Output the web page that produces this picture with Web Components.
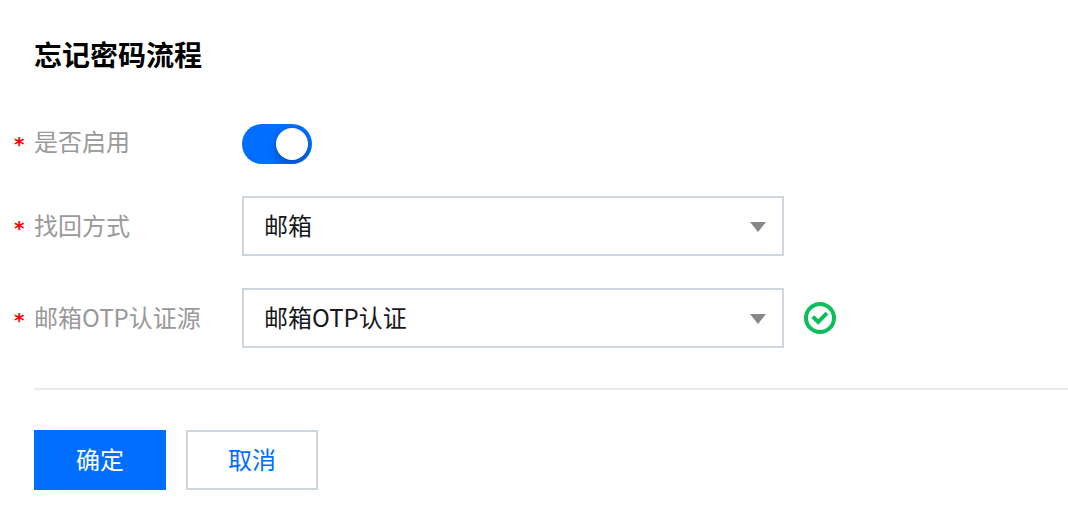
<!DOCTYPE html>
<html lang="zh-CN">
<head>
<meta charset="utf-8">
<title>忘记密码流程</title>
<style>
    :root {
        --primary-color: #006eff;
        --border-color: #cfd5de;
        --divider-color: #e7eaef;
        --label-color: #999;
        --text-color: #16181a;
        --success-color: #0abf5b;
        --required-color: #f00;
    }
    body {
        margin: 0;
        background: #fff;
        color: var(--text-color);
        font: 24px/36px "Noto Sans CJK SC", sans-serif;
    }
</style>
</head>
<body>
<password-flow></password-flow>

<script>
function createTemplate(html) {
    const template = document.createElement('template');
    template.innerHTML = html;
    return template;
}

class BaseComponent extends HTMLElement {
    constructor() {
        super();
        this.attachShadow({ mode: 'open' });
        this.shadowRoot.appendChild(this.constructor.template.content.cloneNode(true));
    }
}

// One line of the form: required mark, label, control
class FormRow extends BaseComponent {
    static template = createTemplate(`
<style>
    :host {
        display: flex;
        align-items: flex-start;
    }
    .label {
        display: flex;
        flex: none;
        box-sizing: border-box;
        width: 242px;
        padding: var(--label-padding, 12px) 0 0 14px;
        color: var(--label-color);
        line-height: 34px;
    }
    .required {
        flex: none;
        width: 20px;
        height: 34px;
        color: var(--required-color);
        font: bold 20px/40px "DejaVu Sans", sans-serif;
    }
    .control {
        display: flex;
        flex: 1;
        align-items: center;
        gap: 20px;
        min-width: 0;
    }
</style>
<div class="label"><span class="required">*</span><slot name="label"></slot></div>
<div class="control"><slot></slot></div>
`);
}

class SelectBox extends BaseComponent {
    static template = createTemplate(`
<style>
    :host {
        display: grid;
        flex: 0 1 542px;
        align-items: center;
        min-width: 0;
    }
    ::slotted(select) {
        grid-area: 1 / 1;
        appearance: none;
        box-sizing: border-box;
        width: 100%;
        margin: 0;
        padding: 9px 48px 11px 20px;
        border: 2px solid var(--border-color);
        border-radius: 0;
        background: #fff;
        color: inherit;
        font: inherit;
    }
    svg {
        grid-area: 1 / 1;
        justify-self: end;
        z-index: 1;
        margin-right: 18px;
        fill: #888;
        pointer-events: none;
    }
</style>
<slot></slot>
<svg width="16" height="12" viewBox="0 0 16 12" aria-hidden="true"><path d="M0 2h16L8 12z"/></svg>
`);
}

class SuccessIcon extends BaseComponent {
    static template = createTemplate(`
<style>
    :host {
        display: flex;
        flex: none;
    }
    svg {
        fill: none;
        stroke: var(--success-color);
        stroke-width: 4;
    }
</style>
<svg width="32" height="32" viewBox="0 0 32 32" role="img" aria-label="通过">
    <circle cx="16" cy="16" r="14"/>
    <path d="M8.8 14.8l5.4 5.2 8.8-8.8"/>
</svg>
`);
}

class ActionButton extends BaseComponent {
    static template = createTemplate(`
<style>
    :host {
        display: block;
    }
    button {
        min-width: 132px;
        margin: 0;
        padding: 9px 20px 11px;
        border: 2px solid var(--border-color);
        background: #fff;
        color: var(--primary-color);
        font: inherit;
        cursor: pointer;
    }
    :host([primary]) button {
        border-color: var(--primary-color);
        background: var(--primary-color);
        color: #fff;
    }
</style>
<button type="button"><slot></slot></button>
`);
}

class PasswordFlow extends BaseComponent {
    static template = createTemplate(`
<style>
    :host {
        display: block;
        padding: 34px 0 26px;
    }
    h2 {
        margin: 0 0 50px 34px;
        color: #000;
        font-size: 28px;
        line-height: 40px;
    }
    .rows {
        display: flex;
        flex-direction: column;
        gap: 32px;
    }
    .compact {
        --label-padding: 0px;
    }
    .switch {
        appearance: none;
        display: flex;
        box-sizing: border-box;
        width: 70px;
        height: 40px;
        margin: 0;
        padding: 4px;
        border-radius: 20px;
        background: #c1c6c8;
        overflow: hidden;
        cursor: pointer;
    }
    .switch::before {
        content: "";
        width: 32px;
        height: 32px;
        border-radius: 50%;
        background: #fff;
        box-shadow: 0 4px 8px rgba(0, 0, 0, .3);
    }
    .switch:checked {
        justify-content: flex-end;
        background: var(--primary-color);
    }
    footer {
        display: flex;
        gap: 20px;
        margin: 40px 0 0 34px;
        padding-top: 40px;
        border-top: 2px solid var(--divider-color);
    }
</style>
<h2>忘记密码流程</h2>
<div class="rows">
    <form-row class="compact">
        <label slot="label" for="enabled">是否启用</label>
        <input class="switch" type="checkbox" id="enabled" checked>
    </form-row>
    <form-row>
        <label slot="label" for="method">找回方式</label>
        <select-box><select id="method"><option>邮箱</option></select></select-box>
    </form-row>
    <form-row>
        <label slot="label" for="source">邮箱OTP认证源</label>
        <select-box><select id="source"><option>邮箱OTP认证</option></select></select-box>
        <success-icon></success-icon>
    </form-row>
</div>
<footer>
    <action-button primary>确定</action-button>
    <action-button>取消</action-button>
</footer>
`);
}

customElements.define('form-row', FormRow);
customElements.define('select-box', SelectBox);
customElements.define('success-icon', SuccessIcon);
customElements.define('action-button', ActionButton);
customElements.define('password-flow', PasswordFlow);
</script>
</body>
</html>
